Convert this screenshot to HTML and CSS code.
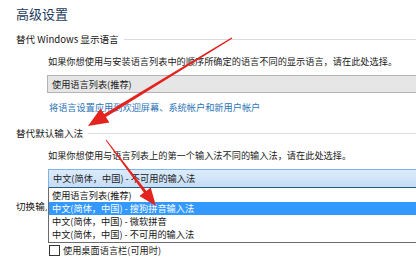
FILE: index.html
```html
<!DOCTYPE HTML>
<html lang="zh-CN">
  <head>
    <meta charset="UTF-8">
    <meta name="viewport" content="width=device-width, initial-scale=1">
    <title>高级设置</title>
    <link rel="stylesheet" href="styles.css">
  </head>
  <body>
    <div class="page">
      <h1 class="title">高级设置</h1>

      <!-- 显示语言 -->
      <section class="group">
        <h2 class="group-title">替代 Windows 显示语言</h2>
        <p class="desc">如果你想使用与安装语言列表中的顺序所确定的语言不同的显示语言，请在此处选择。</p>
        <div class="select">使用语言列表(推荐)</div>
        <a class="link" href="#">将语言设置应用到欢迎屏幕、系统帐户和新用户帐户</a>
      </section>

      <!-- 默认输入法 -->
      <section class="group">
        <h2 class="group-title group-title--second">替代默认输入法</h2>
        <p class="desc">如果你想使用与语言列表上的第一个输入法不同的输入法，请在此处选择。</p>
        <div class="combo">
          <div class="combo-box">中文(简体，中国) - 不可用的输入法</div>
          <ul class="combo-list">
            <li>使用语言列表(推荐)</li>
            <li class="is-selected">中文(简体，中国) - 搜狗拼音输入法</li>
            <li>中文(简体，中国) - 微软拼音</li>
            <li>中文(简体，中国) - 不可用的输入法</li>
          </ul>
        </div>
      </section>

      <!-- 切换输入法 (частично закрыт списком) -->
      <section class="group">
        <h2 class="group-title group-title--third"><span class="group-title-clip">切换输入法</span></h2>
        <label class="check"><span class="check-box"></span>使用桌面语言栏(可用时)</label>
      </section>

      <!-- 标注箭头 -->
      <svg class="arrows" width="416" height="259" viewBox="0 0 416 259">
        <polygon points="232.4,38.5 231.6,37.5 104.1,114.1 100.6,108.6 88,126 109.4,122.5 105.9,117.1" />
        <polygon points="106.4,139.8 105.6,140.2 143.8,192.4 139.5,195.9 156,206 150.7,187.5 146.4,190.9" />
      </svg>
    </div>
  </body>
</html>
```

FILE: styles.css
```css
/* Основа */
html,
body {
  margin: 0;
  padding: 0;
}

body {
  width: 416px;
  height: 259px;
  overflow: hidden;
  background: #ffffff;
  font-family: "Noto Sans CJK SC", "Noto Sans", sans-serif;
  font-size: 9.2px;
  color: #222222;
}

.page {
  position: relative;
  height: 259px;
  padding: 6px 0 0 16px;
  box-sizing: border-box;
}

/* Заголовки */
.title {
  margin: 0;
  font-size: 13px;
  line-height: 16px;
  font-weight: 400;
  color: #1e395b;
}

.group-title {
  display: flex;
  align-items: center;
  margin: 11px 0 0;
  font-size: 9.6px;
  line-height: 12px;
  font-weight: 400;
  color: #151515;
}

.group-title::after {
  content: "";
  flex: 1;
  margin-left: 5px;
  border-top: 1px solid #dcdcdc;
}

.group-title--second {
  margin-top: 14px;
}

.group-title--third {
  margin-top: 12px;
}

.group-title-clip {
  display: block;
  width: 31px;
  overflow: hidden;
  white-space: nowrap;
}

.desc {
  margin: 10px 0 0 32px;
  line-height: 12px;
}

/* Выпадающие списки */
.select {
  margin: 8px 0 0 31px;
  height: 18px;
  box-sizing: border-box;
  padding: 0 4px;
  line-height: 16px;
  background: #e6e6e6;
  border: 1px solid #b4b4b4;
  border-right: none;
}

.link {
  display: block;
  margin: 8px 0 0 33px;
  line-height: 12px;
  color: #2c74b8;
  text-decoration: none;
}

.combo {
  position: relative;
  margin: 8px 0 0 32px;
}

.combo-box {
  height: 19px;
  box-sizing: border-box;
  padding: 0 4px;
  line-height: 17px;
  background: linear-gradient(#dcebfc, #c6ddf6);
  border: 1px solid #7eb4ea;
  border-bottom-color: #2a5a7c;
  border-right: none;
}

.combo-list {
  position: absolute;
  top: 100%;
  left: 0;
  right: 0;
  margin: 0;
  padding: 1px 0 0;
  list-style: none;
  height: 55px;
  box-sizing: border-box;
  background: #ffffff;
  border: 1px solid #6b6b6b;
  border-top: none;
  border-right: none;
  z-index: 1;
}

.combo-list li {
  height: 13px;
  padding: 0 3px;
  line-height: 13px;
  color: #151515;
}

.combo-list .is-selected {
  background: #3399ff;
  color: #ffffff;
}

/* Флажок */
.check {
  display: flex;
  align-items: center;
  margin: 32px 0 0 33px;
  line-height: 12px;
}

.check-box {
  width: 9px;
  height: 9px;
  margin-right: 3px;
  border: 1px solid #333333;
  background: #ffffff;
}

/* Стрелки */
.arrows {
  position: absolute;
  top: 0;
  left: 0;
  z-index: 2;
  fill: #e3231e;
}
```
